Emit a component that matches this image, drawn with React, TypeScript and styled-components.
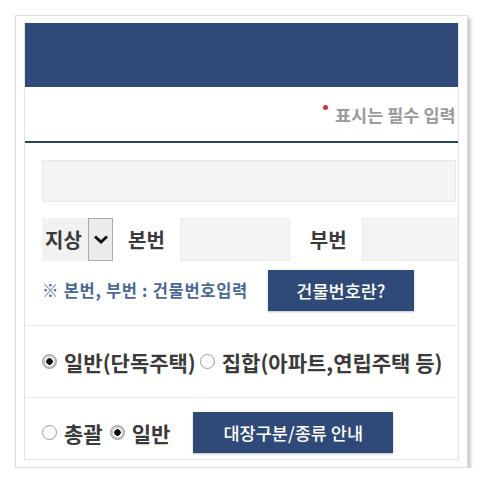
import React from 'react';
import styled, {createGlobalStyle} from "styled-components";

const GlobalStyle = createGlobalStyle`
  body {
    margin: 0;
    background: #ffffff;
    font-family: 'Noto Sans CJK KR', 'Noto Sans', sans-serif;
  }
`

const colors = {
	navy: '#2f4a78',
	line: '#2d4166',
	note: '#4a6898',
	label: '#3a3a3a',
}

type RadioPropsType = {
	checked?: boolean
	label: string
}

const RadioItem = (props: RadioPropsType) => {
	return (
		<RadioWrap>
			<RadioDot checked={props.checked}/>
			<RadioText>{props.label}</RadioText>
		</RadioWrap>
	);
};

export default function App() {
	return (
		<>
			<GlobalStyle/>
			<Frame>
				<Panel>
					<Header/>
					<Required>
						<RequiredMark/>
						<RequiredText>표시는 필수 입력</RequiredText>
					</Required>
					<Form>
						<WideInput/>
						<AddressRow>
							<Select>
								<SelectValue>지상</SelectValue>
								<SelectArrow>
									<svg width="16" height="11" viewBox="0 0 16 11">
										<path d="M2 2.5 L8 8 L14 2.5" fill="none" stroke="#111" strokeWidth="3"/>
									</svg>
								</SelectArrow>
							</Select>
							<Label>본번</Label>
							<NumberInput width={110}/>
							<Label $gap={20}>부번</Label>
							<NumberInput width={200}/>
						</AddressRow>
						<NoteRow>
							<Note>※ 본번, 부번 : 건물번호입력</Note>
							<Button $width={146} $gap={20}>건물번호란?</Button>
						</NoteRow>
					</Form>
					<RadioRow>
						<RadioItem checked label="일반(단독주택)"/>
						<RadioItem label="집합(아파트,연립주택 등)"/>
					</RadioRow>
					<LedgerRow>
						<RadioItem label="총괄"/>
						<RadioItem checked label="일반"/>
						<Button $width={200} $gap={16}>대장구분/종류 안내</Button>
					</LedgerRow>
				</Panel>
			</Frame>
		</>
	);
}

const Frame = styled.div`
  margin: 15px 0 0 15px;
  width: 453px;
  height: 453px;
  box-sizing: border-box;
  padding: 7px 8px 8px 8px;
  background: #fff;
  border: 1px solid #dedede;
  box-shadow: 2px 3px 4px rgba(0, 0, 0, 0.28);
`

const Panel = styled.div`
  height: 100%;
  display: flex;
  flex-direction: column;
  border: 1px solid #e3e3e3;
  border-top: none;
  overflow: hidden;
`

const Header = styled.div`
  height: 64px;
  flex-shrink: 0;
  margin: 0 -1px;
  background: ${colors.navy};
`

const Required = styled.div`
  height: 54px;
  flex-shrink: 0;
  display: flex;
  align-items: center;
  padding-left: 298px;
  border-bottom: 2px solid ${colors.line};
  white-space: nowrap;
`

const RequiredMark = styled.span`
  width: 5px;
  height: 5px;
  flex-shrink: 0;
  border-radius: 50%;
  background: #c8323c;
  margin: 0 7px 14px 0;
`

const RequiredText = styled.span`
  font-size: 17.5px;
  font-weight: 700;
  color: #9a9a9a;
`

const Form = styled.div`
  flex-shrink: 0;
  padding: 17px 0 14px 17px;
  border-bottom: 1px solid #ededed;
`

const WideInput = styled.div`
  width: 414px;
  height: 42px;
  box-sizing: border-box;
  background: #f4f4f4;
  border: 1px solid #e8e8e8;
`

const AddressRow = styled.div`
  display: flex;
  align-items: center;
  height: 43px;
  margin-top: 16px;
  white-space: nowrap;
`

const Select = styled.div`
  display: flex;
  width: 71px;
  height: 43px;
  flex-shrink: 0;
`

const SelectValue = styled.div`
  flex: 1;
  display: flex;
  align-items: center;
  padding-left: 3px;
  background: #f2f2f2;
  font-size: 20px;
  font-weight: 700;
  color: ${colors.label};
`

const SelectArrow = styled.div`
  width: 25px;
  box-sizing: border-box;
  display: flex;
  align-items: center;
  justify-content: center;
  background: #ebebeb;
  border: 1px solid #a9a9a9;
`

const Label = styled.span<{ $gap?: number }>`
  margin: 0 15px 0 ${props => props.$gap || 15}px;
  font-size: 20px;
  font-weight: 700;
  color: ${colors.label};
`

const NumberInput = styled.div<{ width: number }>`
  width: ${props => props.width}px;
  height: 43px;
  flex-shrink: 0;
  box-sizing: border-box;
  background: #f4f4f4;
  border: 1px solid #ebebeb;
`

const NoteRow = styled.div`
  display: flex;
  align-items: center;
  height: 42px;
  margin-top: 8px;
  white-space: nowrap;
`

const Note = styled.span`
  font-size: 16.5px;
  font-weight: 700;
  color: ${colors.note};
  letter-spacing: 0.7px;
`

const Button = styled.div<{ $width: number, $gap: number }>`
  width: ${props => props.$width}px;
  height: 41px;
  flex-shrink: 0;
  margin-left: ${props => props.$gap}px;
  display: flex;
  align-items: center;
  justify-content: center;
  background: ${colors.navy};
  color: #fff;
  font-size: 17.5px;
  font-weight: 500;
  box-shadow: 0 1px 2px rgba(0, 0, 0, 0.25);
`

const RadioRow = styled.div`
  height: 71px;
  flex-shrink: 0;
  display: flex;
  align-items: center;
  gap: 4px;
  padding-left: 17px;
  border-bottom: 1px solid #ededed;
  white-space: nowrap;
`

const LedgerRow = styled.div`
  flex: 1;
  display: flex;
  align-items: flex-start;
  gap: 7px;
  padding: 14px 0 0 17px;
  white-space: nowrap;
  & > div:first-child, & > div:nth-child(2) {
    height: 41px;
  }
`

const RadioWrap = styled.div`
  display: flex;
  align-items: center;
  gap: 7px;
`

const RadioDot = styled.span<{ checked?: boolean }>`
  width: 15px;
  height: 15px;
  box-sizing: border-box;
  border-radius: 50%;
  flex-shrink: 0;
  border: 1px solid #9a9a9a;
  background: ${props => props.checked
	? 'radial-gradient(circle, #111 0 3px, #fff 3.5px 4.5px, #c9c9c9 5px)'
	: '#fff'};
`

const RadioText = styled.span`
  font-size: 21px;
  font-weight: 700;
  color: ${colors.label};
`
